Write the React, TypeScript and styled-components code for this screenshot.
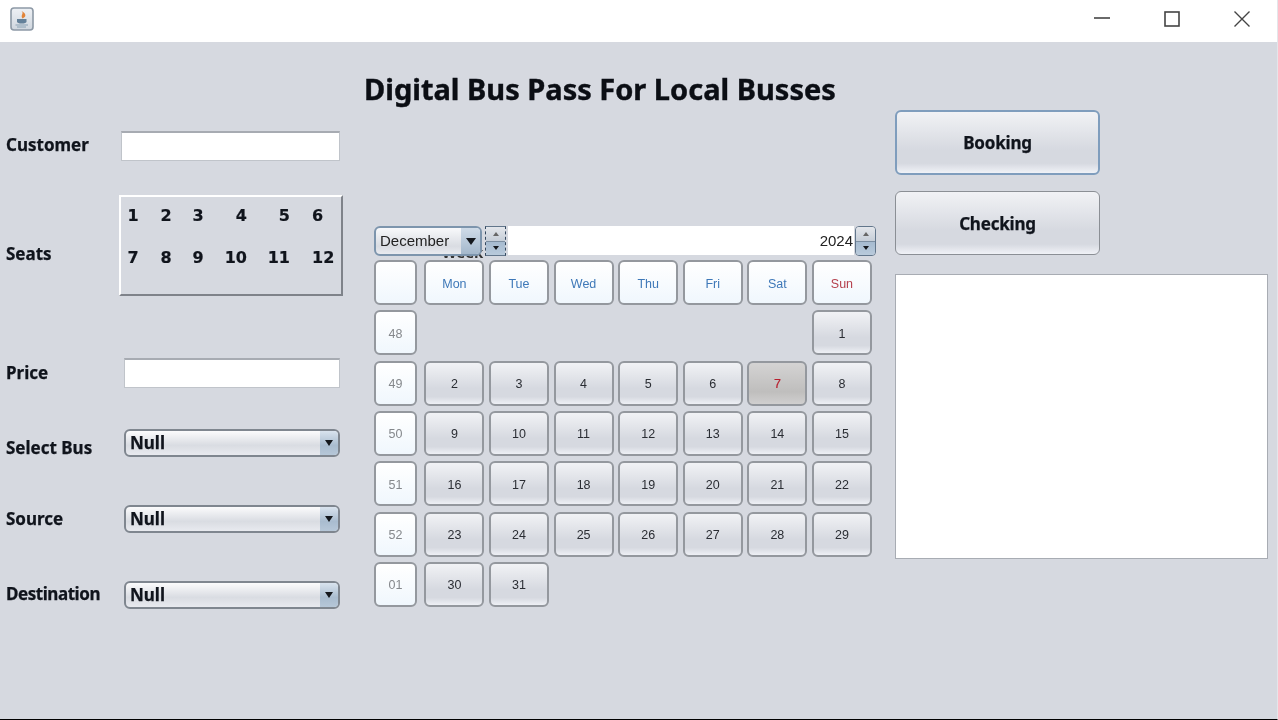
import React from "react";
import styled, { createGlobalStyle } from "styled-components";

const GlobalStyle = createGlobalStyle`
  html, body {
    margin: 0;
    padding: 0;
    background: #d6d9e0;
  }
`;

const Window = styled.div`
  width: 1278px;
  height: 720px;
  box-sizing: border-box;
  display: flex;
  flex-direction: column;
  overflow: hidden;
  background: #d6d9e0;
  border-bottom: 1px solid #000;
  border-right: 1px solid #e4e6ea;
  font-family: "Noto Sans", sans-serif;
  color: #10141c;
  filter: blur(0.4px);
`;

const TitleBar = styled.div`
  height: 42px;
  flex: none;
  display: flex;
  align-items: center;
  justify-content: space-between;
  padding: 0 0 4px 10px;
  box-sizing: border-box;
  background: #fff;
`;

const Controls = styled.div`
  display: flex;
`;

const ControlButton = styled.div`
  width: 70px;
  display: flex;
  justify-content: center;
`;

const Body = styled.div`
  flex: 1;
  display: flex;
`;

const LeftColumn = styled.div`
  width: 374px;
  flex: none;
  box-sizing: border-box;
  padding: 89px 0 0 6px;
`;

const FormRow = styled.div<{ $gap: number }>`
  display: flex;
  align-items: flex-start;
  margin-top: ${(p) => p.$gap}px;
  width: 334px;
`;

const Label = styled.div<{ $top: number; $tight?: boolean }>`
  flex: none;
  width: 118px;
  font-size: 17px;
  font-weight: 700;
  line-height: 20px;
  padding-top: ${(p) => p.$top}px;
  letter-spacing: ${(p) => (p.$tight ? "-0.45px" : "0")};
  -webkit-text-stroke: 0.25px #10141c;
`;

const TextField = styled.div<{ $indent?: number }>`
  height: 30px;
  flex: 1;
  margin-left: ${(p) => p.$indent || 0}px;
  box-sizing: border-box;
  background: #fff;
  border: 1px solid #c0c4ca;
  border-top: 2px solid #a7abb2;
`;

const SeatPanel = styled.div`
  flex: 1;
  height: 101px;
  margin-left: -5px;
  margin-right: -3px;
  box-sizing: border-box;
  border: 2px solid;
  border-color: #fff #7f838a #7f838a #fff;
  display: grid;
  grid-template-columns: 16px 50px 14px 42px 43px 44px;
  grid-template-rows: 36px 48px;
  padding-left: 4px;

  & > :nth-child(6n) {
    padding-left: 22px;
  }
`;

const Seat = styled.div<{ $align: string }>`
  font-family: "DejaVu Sans", sans-serif;
  font-size: 16px;
  font-weight: 700;
  display: flex;
  align-items: center;
  justify-content: ${(p) => p.$align};
  -webkit-text-stroke: 0.2px #10141c;
`;

const Combo = styled.div`
  flex: 1;
  height: 28px;
  box-sizing: border-box;
  display: flex;
  overflow: hidden;
  border: 2px solid #7f868f;
  border-radius: 6px;
  background: linear-gradient(#fbfbfc 0%, #d9dce2 60%, #e8eaef 100%);
`;

const ComboText = styled.div`
  flex: 1;
  padding-left: 4px;
  font-size: 17px;
  font-weight: 700;
  line-height: 23px;
  -webkit-text-stroke: 0.25px #10141c;
`;

const ComboArrow = styled.div`
  width: 18px;
  display: flex;
  align-items: center;
  justify-content: center;
  background: linear-gradient(#d9e3ee 0%, #a9bccf 60%, #b6c7d8 100%);
`;

const Arrow = styled.div<{ $up?: boolean; $size?: number; $color?: string }>`
  width: 0;
  height: 0;
  border-left: ${(p) => p.$size || 4}px solid transparent;
  border-right: ${(p) => p.$size || 4}px solid transparent;
  ${(p) =>
    p.$up
      ? `border-bottom: ${(p.$size || 4) * 1.5}px solid ${p.$color || "#15181d"};`
      : `border-top: ${(p.$size || 4) * 1.5}px solid ${p.$color || "#15181d"};`}
`;

const MiddleColumn = styled.div`
  width: 521px;
  flex: none;
  display: flex;
  flex-direction: column;
`;

const Heading = styled.h1`
  margin: 29px 0 0 -10px;
  height: 36px;
  font-size: 29px;
  line-height: 36px;
  font-weight: 700;
  white-space: nowrap;
  color: #0b0e14;
  -webkit-text-stroke: 0.4px #0b0e14;
`;

const CalendarHeader = styled.div`
  position: relative;
  margin-top: 119px;
  width: 502px;
  height: 31px;
  display: flex;
  align-items: flex-start;
`;

const HiddenWeek = styled.div`
  position: absolute;
  left: 68px;
  top: 19px;
  font-size: 15px;
  font-weight: 700;
  line-height: 14px;
  color: #333;
`;

const MonthCombo = styled.div`
  position: relative;
  flex: none;
  width: 108px;
  height: 30px;
  box-sizing: border-box;
  display: flex;
  overflow: hidden;
  border: 2px solid #7d95ad;
  border-radius: 6px;
  background: linear-gradient(#f8f9fb 0%, #d9dce2 70%, #e9ebf0 100%);
`;

const MonthText = styled.div`
  flex: 1;
  padding-left: 4px;
  font-family: "Liberation Sans", sans-serif;
  font-size: 15px;
  line-height: 26px;
  color: #222;
`;

const MonthArrow = styled.div`
  width: 19px;
  display: flex;
  align-items: center;
  justify-content: center;
  background: linear-gradient(#cfdbe8 0%, #a4b8cc 100%);
`;

const Spinner = styled.div<{ $left: number; $focus?: boolean }>`
  position: relative;
  flex: none;
  margin-left: ${(p) => p.$left}px;
  width: 21px;
  height: 30px;
  box-sizing: border-box;
  display: flex;
  flex-direction: column;
  overflow: hidden;
  border: 1px solid #62768b;
  border-radius: 4px;
  ${(p) =>
    p.$focus
      ? "border-radius: 0; border-left: 1px dashed #34495f; border-right: 1px dashed #34495f;"
      : ""}
`;

const SpinPart = styled.div<{ $lower?: boolean }>`
  flex: 1;
  display: flex;
  align-items: center;
  justify-content: center;
  background: ${(p) =>
    p.$lower
      ? "linear-gradient(#a6bbd0, #b9cadb)"
      : "linear-gradient(#e3e6eb, #c6ced8)"};
  border-top: ${(p) => (p.$lower ? "1px solid #7d8fa2" : "none")};
`;

const YearField = styled.div`
  flex: 1;
  height: 29px;
  margin-left: 2px;
  background: #fff;
  text-align: right;
  padding-right: 1px;
  font-family: "Liberation Sans", sans-serif;
  font-size: 15px;
  line-height: 30px;
  color: #222;
`;

const CalendarGrid = styled.div`
  margin-top: 3px;
  display: grid;
  grid-template-columns: 45.8px repeat(7, 60px);
  grid-auto-rows: 45px;
  column-gap: 4.6px;
  row-gap: 5.33px;
`;

const DayButton = styled.div<{ $kind: "day" | "head" | "week" | "today"; $col?: number }>`
  box-sizing: border-box;
  ${(p) => (p.$col === 1 ? "width: 43px;" : "")}
  ${(p) => (p.$col ? `grid-column: ${p.$col};` : "")}
  display: flex;
  align-items: center;
  justify-content: center;
  padding-top: 2px;
  border: 2px solid #94989e;
  border-radius: 6px;
  font-family: "Liberation Sans", sans-serif;
  font-size: 12.5px;
  background: ${(p) =>
    p.$kind === "day"
      ? "linear-gradient(#f1f2f5 0%, #d6d9e0 62%, #d6d9e0 82%, #eef0f5 100%)"
      : p.$kind === "today"
        ? "linear-gradient(#d4d3d3 0%, #bfbebd 70%, #d0cfcf 100%)"
        : "linear-gradient(#ffffff 0%, #f0f7fd 100%)"};
  color: ${(p) =>
    p.$kind === "today" ? "#b8202f" : p.$kind === "week" ? "#85888c" : "#2a2d33"};
  ${(p) => (p.$kind === "today" ? "-webkit-text-stroke: 0.2px #b8202f;" : "")}
`;

const HeadText = styled.span<{ $sun?: boolean }>`
  color: ${(p) => (p.$sun ? "#b5404d" : "#3e78b8")};
`;

const RightColumn = styled.div`
  flex: 1;
  display: flex;
  flex-direction: column;
  align-items: flex-start;
  padding-top: 68px;
`;

const ActionButton = styled.div<{ $focus?: boolean }>`
  width: 205px;
  height: ${(p) => (p.$focus ? 65 : 64)}px;
  margin-bottom: ${(p) => (p.$focus ? 16 : 19)}px;
  box-sizing: border-box;
  display: flex;
  align-items: center;
  justify-content: center;
  border: ${(p) => (p.$focus ? "2px solid #7f9dbd" : "1px solid #8b8f95")};
  border-radius: 6px;
  font-size: 17px;
  font-weight: 700;
  letter-spacing: -0.2px;
  -webkit-text-stroke: 0.25px #10141c;
  background: linear-gradient(#f1f2f5 0%, #d6d9e0 62%, #d6d9e0 84%, #f0f2f7 100%);
`;

const TextArea = styled.div`
  width: 373px;
  height: 285px;
  box-sizing: border-box;
  background: #fff;
  border: 1px solid #a8acb3;
`;

const JavaIcon = () => (
  <svg width="24" height="24" viewBox="0 0 24 24">
    <defs>
      <linearGradient id="javaBg" x1="0" y1="0" x2="0" y2="1">
        <stop offset="0" stopColor="#eef1f5" />
        <stop offset="1" stopColor="#cfd6de" />
      </linearGradient>
    </defs>
    <rect x="1" y="1" width="22" height="22" rx="3" fill="url(#javaBg)" stroke="#8d99a6" strokeWidth="1.6" />
    <path d="M11.5 4 C14.5 6.5 10 8 12.5 11.5 C16.5 10 16.5 6.5 11.5 4 Z" fill="#e2853a" />
    <path d="M7 12 H16.5 V14.5 C16.5 16 14.5 16.5 11.7 16.5 C9 16.5 7 16 7 14.5 Z" fill="#64819a" />
    <path d="M5.5 18 H18 M7 20 H16" stroke="#8aa1b4" strokeWidth="1.2" />
  </svg>
);

const MinimizeIcon = () => (
  <svg width="16" height="16" viewBox="0 0 16 16">
    <path d="M0 7 H16" stroke="#444" strokeWidth="1.6" />
  </svg>
);

const MaximizeIcon = () => (
  <svg width="16" height="16" viewBox="0 0 16 16">
    <rect x="1" y="1" width="14" height="14" fill="none" stroke="#444" strokeWidth="1.6" />
  </svg>
);

const CloseIcon = () => (
  <svg width="16" height="16" viewBox="0 0 16 16">
    <path d="M0.5 0.5 L15.5 15.5 M15.5 0.5 L0.5 15.5" stroke="#444" strokeWidth="1.4" />
  </svg>
);

const seats: [string, string][] = [
  ["1", "center"],
  ["2", "center"],
  ["3", "center"],
  ["4", "flex-end"],
  ["5", "flex-end"],
  ["6", "flex-start"],
  ["7", "center"],
  ["8", "center"],
  ["9", "center"],
  ["10", "flex-end"],
  ["11", "flex-end"],
  ["12", "flex-start"],
];

const headers = ["Mon", "Tue", "Wed", "Thu", "Fri", "Sat", "Sun"];

// week number, then the column the first day sits in, then the days of that row
const weeks: { week: string; start: number; days: number[] }[] = [
  { week: "48", start: 8, days: [1] },
  { week: "49", start: 2, days: [2, 3, 4, 5, 6, 7, 8] },
  { week: "50", start: 2, days: [9, 10, 11, 12, 13, 14, 15] },
  { week: "51", start: 2, days: [16, 17, 18, 19, 20, 21, 22] },
  { week: "52", start: 2, days: [23, 24, 25, 26, 27, 28, 29] },
  { week: "01", start: 2, days: [30, 31] },
];

const App = () => {
  return (
    <Window>
      <GlobalStyle />
      <TitleBar>
        <JavaIcon />
        <Controls>
          <ControlButton>
            <MinimizeIcon />
          </ControlButton>
          <ControlButton>
            <MaximizeIcon />
          </ControlButton>
          <ControlButton>
            <CloseIcon />
          </ControlButton>
        </Controls>
      </TitleBar>
      <Body>
        <LeftColumn>
          <FormRow $gap={0}>
            <Label $top={4}>Customer</Label>
            <TextField $indent={-3} />
          </FormRow>
          <FormRow $gap={34}>
            <Label $top={49}>Seats</Label>
            <SeatPanel>
              {seats.map(([n, align]) => (
                <Seat key={n} $align={align}>
                  {n}
                </Seat>
              ))}
            </SeatPanel>
          </FormRow>
          <FormRow $gap={62}>
            <Label $top={5}>Price</Label>
            <TextField />
          </FormRow>
          <FormRow $gap={41}>
            <Label $top={9}>Select Bus</Label>
            <Combo>
              <ComboText>Null</ComboText>
              <ComboArrow>
                <Arrow />
              </ComboArrow>
            </Combo>
          </FormRow>
          <FormRow $gap={47}>
            <Label $top={4}>Source</Label>
            <Combo>
              <ComboText>Null</ComboText>
              <ComboArrow>
                <Arrow />
              </ComboArrow>
            </Combo>
          </FormRow>
          <FormRow $gap={48}>
            <Label $top={3} $tight>
              Destination
            </Label>
            <Combo>
              <ComboText>Null</ComboText>
              <ComboArrow>
                <Arrow />
              </ComboArrow>
            </Combo>
          </FormRow>
        </LeftColumn>
        <MiddleColumn>
          <Heading>Digital Bus Pass For Local Busses</Heading>
          <CalendarHeader>
            <HiddenWeek>Week</HiddenWeek>
            <MonthCombo>
              <MonthText>December</MonthText>
              <MonthArrow>
                <Arrow $size={5} />
              </MonthArrow>
            </MonthCombo>
            <Spinner $left={3} $focus>
              <SpinPart>
                <Arrow $up $size={3} $color="#666" />
              </SpinPart>
              <SpinPart $lower>
                <Arrow $size={3} />
              </SpinPart>
            </Spinner>
            <YearField>2024</YearField>
            <Spinner $left={1}>
              <SpinPart>
                <Arrow $up $size={3} $color="#666" />
              </SpinPart>
              <SpinPart $lower>
                <Arrow $size={3} />
              </SpinPart>
            </Spinner>
          </CalendarHeader>
          <CalendarGrid>
            <DayButton $kind="head" $col={1} />
            {headers.map((h) => (
              <DayButton key={h} $kind="head">
                <HeadText $sun={h === "Sun"}>{h}</HeadText>
              </DayButton>
            ))}
            {weeks.map((row) => (
              <React.Fragment key={row.week}>
                <DayButton $kind="week" $col={1}>
                  {row.week}
                </DayButton>
                {row.days.map((d, i) => (
                  <DayButton
                    key={d}
                    $kind={d === 7 ? "today" : "day"}
                    $col={row.start + i}
                  >
                    {d}
                  </DayButton>
                ))}
              </React.Fragment>
            ))}
          </CalendarGrid>
        </MiddleColumn>
        <RightColumn>
          <ActionButton $focus>Booking</ActionButton>
          <ActionButton>Checking</ActionButton>
          <TextArea />
        </RightColumn>
      </Body>
    </Window>
  );
};

export default App;
